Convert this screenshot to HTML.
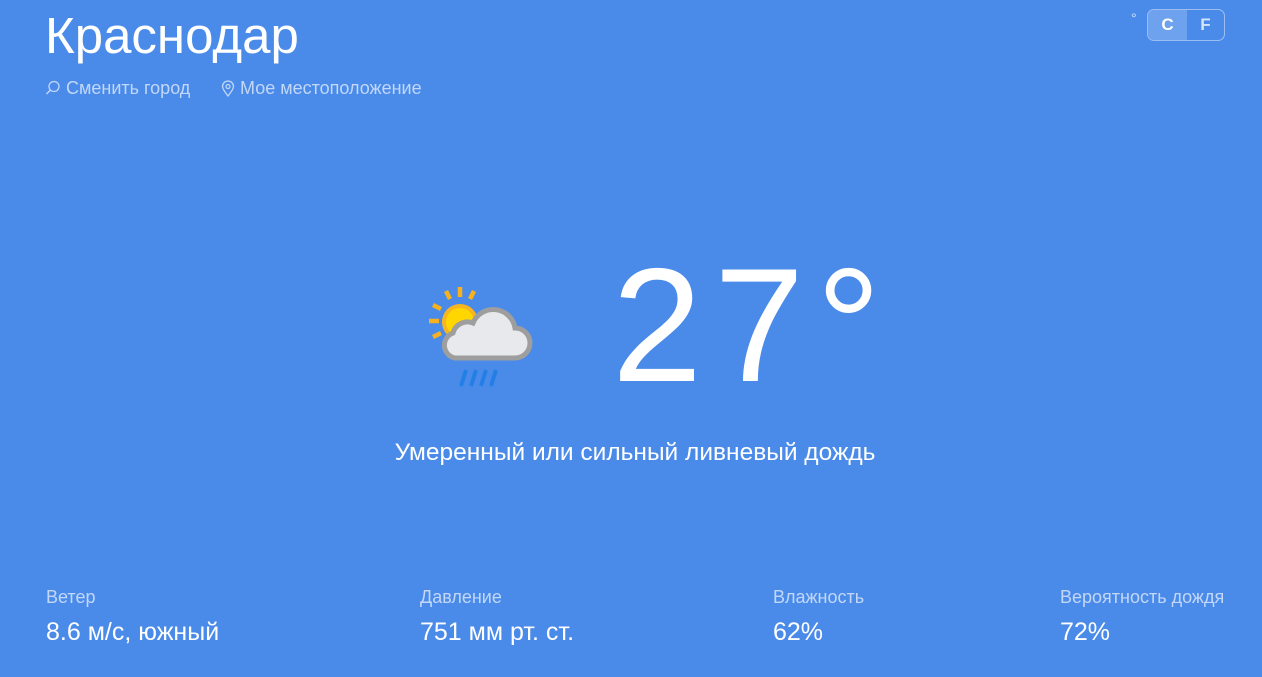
<!DOCTYPE html>
<html><head><meta charset="utf-8"><style>
body{margin:0;width:1262px;height:677px;background:#4a8bea;font-family:"Liberation Sans",sans-serif;color:#fff;position:relative;overflow:hidden}
.a{position:absolute;white-space:nowrap}
.lnk{color:#c3d7f7;font-size:18px;top:78px}
.lab{color:#c3d7f7;font-size:18px;top:587px}
.val{font-size:25px;top:618px}
</style></head><body>
<div class="a" style="left:45px;top:6px;font-size:51px">Краснодар</div>
<div class="a lnk" style="left:45px">
<svg width="16" height="16" viewBox="0 0 16 16" style="vertical-align:-2px"><circle cx="9" cy="6.5" r="5" fill="none" stroke="#c3d7f7" stroke-width="1.3"/><path d="M5.5 10 L1.5 14" stroke="#c3d7f7" stroke-width="1.5"/></svg> Сменить город</div>
<div class="a lnk" style="left:221px">
<svg width="14" height="17" viewBox="0 0 14 17" style="vertical-align:-3px"><path d="M7 16 C3 11 1.5 8.5 1.5 6.5 A5.5 5.5 0 0 1 12.5 6.5 C12.5 8.5 11 11 7 16Z" fill="none" stroke="#c3d7f7" stroke-width="1.3"/><circle cx="7" cy="6.5" r="2" fill="none" stroke="#c3d7f7" stroke-width="1.2"/></svg> Мое местоположение</div>
<div class="a" style="left:1131px;top:10px;font-size:14px;color:#d6e4fa">°</div>
<div class="a" style="left:1147px;top:9px;width:76px;height:30px;border:1px solid #9cbff2;border-radius:7px;overflow:hidden;font-size:17px;font-weight:bold">
<div style="position:absolute;left:0;top:0;width:39px;height:30px;background:#6fa2ee;text-align:center;line-height:30px;color:#fff">C</div>
<div style="position:absolute;left:39px;top:0;width:37px;height:30px;text-align:center;line-height:30px;color:#d6e4fa">F</div>
</div>
<svg class="a" style="left:420px;top:284px" width="115" height="106" viewBox="420 284 115 106">
<g stroke="#f5b21e" stroke-width="4.5">
<path d="M460 287v10M446 291l4 8M474 291l-4 8M433 305l8 4M429 321h10M433 337l8-4"/>
</g>
<circle cx="460" cy="322" r="16" fill="#ffd600" stroke="#f7b51e" stroke-width="4"/>
<path d="M455 358 a13 13 0 0 1 -2-25 a15 15 0 0 1 20-10 a22 22 0 0 1 42 5 a15 15 0 0 1 0 30 Z" fill="#e8e9ec" stroke="#9e9e9e" stroke-width="5"/>
<g stroke="#1f7ee6" stroke-width="4"><path d="M466 370l-5 16M476 370l-5 16M486 370l-5 16M496 370l-5 16" opacity=".9"/></g>
</svg>
<div class="a" style="left:612px;top:226px;font-size:162px;line-height:200px;letter-spacing:12px">27°</div>
<div class="a" style="left:0;width:1270px;text-align:center;top:439px;font-size:24.5px">Умеренный или сильный ливневый дождь</div>
<div class="a lab" style="left:46px">Ветер</div>
<div class="a val" style="left:46px">8.6 м/с, южный</div>
<div class="a lab" style="left:420px">Давление</div>
<div class="a val" style="left:420px">751 мм рт. ст.</div>
<div class="a lab" style="left:773px">Влажность</div>
<div class="a val" style="left:773px">62%</div>
<div class="a lab" style="left:1060px">Вероятность дождя</div>
<div class="a val" style="left:1060px">72%</div>
</body></html>
